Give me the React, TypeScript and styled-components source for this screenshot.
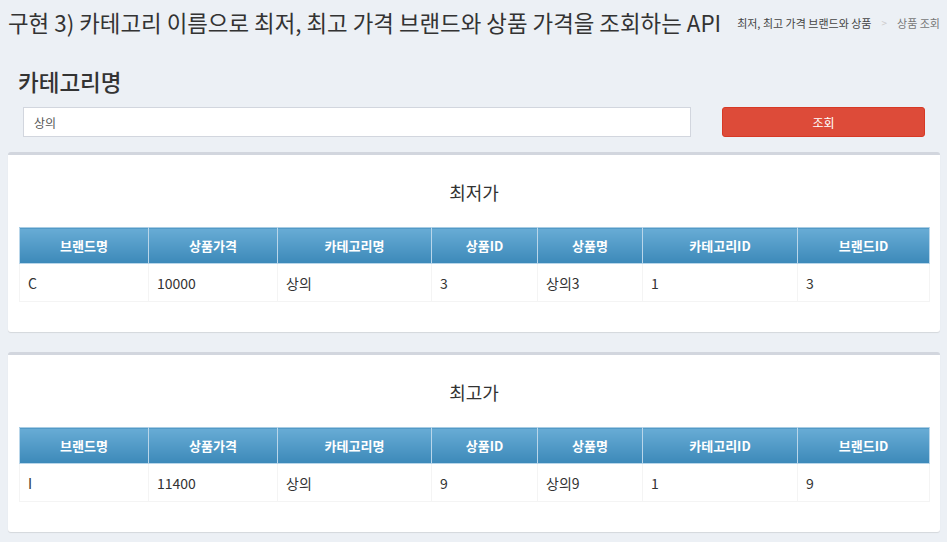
import React from "react";
import styled, { createGlobalStyle } from "styled-components";

const Global = createGlobalStyle`
  html, body { margin: 0; padding: 0; background: #ecf0f5; }
  body { font-family: "Noto Sans CJK KR", "Noto Sans", sans-serif; color: #333; }
  * { box-sizing: border-box; }
`;

const Page = styled.div`
  width: 947px;
  min-height: 542px;
  background: #ecf0f5;
`;

const TopBar = styled.header`
  display: flex;
  align-items: center;
  height: 45px;
  padding: 0 7px 0 8px;
`;

const Title = styled.h1`
  margin: 0;
  font-size: 22.4px;
  font-weight: 400;
  line-height: 1;
  color: #333;
  white-space: nowrap;
`;

const Crumbs = styled.ol`
  display: flex;
  align-items: center;
  gap: 10px;
  list-style: none;
  margin: 0 0 0 auto;
  padding: 0;
  font-size: 11px;
  white-space: nowrap;
`;

const Crumb = styled.li<{ $active?: boolean }>`
  color: ${(p) => (p.$active ? "#777" : "#444")};
`;

const Sep = styled.li`
  color: #ccc;
  font-size: 10px;
`;

const Search = styled.section`
  padding: 21px 22px 15px 18px;
`;

const Label = styled.h2`
  margin: 0 0 11px;
  font-size: 22.5px;
  font-weight: 500;
  line-height: 30px;
  color: #333;
`;

const FormRow = styled.div`
  display: flex;
  align-items: center;
  gap: 31px;
  padding-left: 5px;
`;

const Input = styled.input`
  width: 668px;
  height: 30px;
  border: 1px solid #d2d6de;
  background: #fff;
  padding: 0 10px;
  font-family: inherit;
  font-size: 12px;
  color: #555;
  outline: none;
`;

const Button = styled.button`
  width: 203px;
  height: 30px;
  border: 1px solid #d73925;
  border-radius: 3px;
  background: #dd4b39;
  color: #fff;
  font-family: inherit;
  font-size: 12px;
`;

const Cards = styled.div`
  display: flex;
  flex-direction: column;
  gap: 20px;
  padding: 0 7px 0 8px;
`;

const Card = styled.section`
  background: #fff;
  border-top: 3px solid #d2d6de;
  border-radius: 3px;
  box-shadow: 0 1px 1px rgba(0, 0, 0, 0.1);
  padding: 0 11px 30px;
`;

const CardTitle = styled.h3`
  margin: 0;
  height: 72px;
  display: flex;
  align-items: center;
  justify-content: center;
  padding-top: 2px;
  font-size: 18px;
  font-weight: 400;
  color: #333;
`;

const Table = styled.table`
  width: 910px;
  border-collapse: collapse;
  table-layout: fixed;
  border: 1px solid #f4f4f4;
`;

const Th = styled.th`
  height: 36px;
  padding: 0 8px;
  background: linear-gradient(#68acd5, #3c89b9);
  border: 1px solid #b9d6ea;
  border-top-color: #a9cde4;
  color: #fff;
  font-size: 13px;
  font-weight: 700;
  text-align: center;
`;

const Td = styled.td`
  height: 38px;
  padding: 0 8px;
  border: 1px solid #f4f4f4;
  font-size: 14px;
  color: #333;
  text-align: left;
`;

const columns = [
  { label: "브랜드명", width: 129 },
  { label: "상품가격", width: 129 },
  { label: "카테고리명", width: 154 },
  { label: "상품ID", width: 106 },
  { label: "상품명", width: 105 },
  { label: "카테고리ID", width: 155 },
  { label: "브랜드ID", width: 132 },
];

const results = [
  { title: "최저가", row: ["C", "10000", "상의", "3", "상의3", "1", "3"] },
  { title: "최고가", row: ["I", "11400", "상의", "9", "상의9", "1", "9"] },
];

export default function App() {
  return (
    <Page>
      <Global />
      <TopBar>
        <Title>구현 3) 카테고리 이름으로 최저, 최고 가격 브랜드와 상품 가격을 조회하는 API</Title>
        <Crumbs>
          <Crumb>최저, 최고 가격 브랜드와 상품</Crumb>
          <Sep>&gt;</Sep>
          <Crumb $active>상품 조회</Crumb>
        </Crumbs>
      </TopBar>
      <Search>
        <Label>카테고리명</Label>
        <FormRow>
          <Input defaultValue="상의" />
          <Button>조회</Button>
        </FormRow>
      </Search>
      <Cards>
        {results.map((r) => (
          <Card key={r.title}>
            <CardTitle>{r.title}</CardTitle>
            <Table>
              <colgroup>
                {columns.map((c) => (
                  <col key={c.label} style={{ width: c.width }} />
                ))}
              </colgroup>
              <thead>
                <tr>
                  {columns.map((c) => (
                    <Th key={c.label}>{c.label}</Th>
                  ))}
                </tr>
              </thead>
              <tbody>
                <tr>
                  {r.row.map((v, i) => (
                    <Td key={i}>{v}</Td>
                  ))}
                </tr>
              </tbody>
            </Table>
          </Card>
        ))}
      </Cards>
    </Page>
  );
}
